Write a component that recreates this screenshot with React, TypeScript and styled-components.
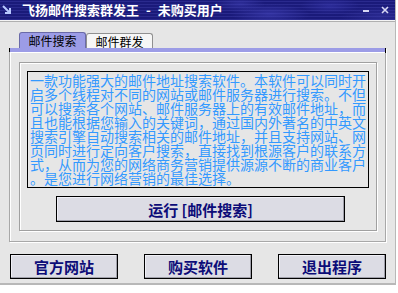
import * as React from 'react'
import styled, { createGlobalStyle } from 'styled-components'

const GlobalStyle = createGlobalStyle`
  html, body {
    margin: 0;
    padding: 0;
    background: #ffffff;
  }
  body {
    font-family: "Noto Sans CJK SC", "Liberation Sans", sans-serif;
  }
`

const Window = styled.div`
  width: 396px;
  height: 285px;
  box-sizing: border-box;
  background: #e6e6e6;
  border-right: 1px solid #b8b8b8;
  border-bottom: 2px solid #b8b8b8;
  display: flex;
  flex-direction: column;
  position: relative;
  overflow: hidden;
`

const TitleBar = styled.div`
  height: 20px;
  flex-shrink: 0;
  display: flex;
  align-items: center;
  background:
    radial-gradient(ellipse 40px 10px at 270px 14px, rgba(70, 70, 190, 0.55), transparent),
    radial-gradient(ellipse 30px 9px at 330px 6px, rgba(60, 60, 180, 0.5), transparent),
    radial-gradient(ellipse 25px 8px at 240px 4px, rgba(70, 70, 190, 0.45), transparent),
    radial-gradient(ellipse 40px 10px at 380px 16px, rgba(60, 60, 170, 0.45), transparent),
    repeating-linear-gradient(0deg, rgba(90, 90, 200, 0.25) 0 1px, transparent 1px 3px),
    #1a1a7a;
  border-bottom: 1px solid #f4f4f4;
`

const AppIcon = styled.svg`
  width: 10px;
  height: 10px;
  margin-left: 2px;
  margin-right: 10px;
`

const Title = styled.div`
  color: #ffffff;
  font-weight: 700;
  font-size: 13px;
  line-height: 20px;
  white-space: nowrap;
  flex: 1;
`

const Dash = styled.span`
  padding: 0 7px;
`

const WinButtons = styled.div`
  display: flex;
  align-items: center;
  gap: 12px;
  margin-right: 6px;
  color: #d8d8f4;
`

const MinGlyph = styled.div`
  width: 6px;
  height: 2px;
  margin-top: 1px;
  background: #d8d8f4;
`

const CloseGlyph = styled.svg`
  width: 8px;
  height: 8px;
`

const Body = styled.div`
  flex: 1;
  display: flex;
  flex-direction: column;
  padding: 0 9px 0 9px;
  border-top: 1px solid #b0b0b0;
`

const TabStrip = styled.div`
  display: flex;
  padding-left: 10px;
  margin-top: 10px;
  height: 16px;
  align-items: flex-end;
`

const Tab = styled.div<{ $active?: boolean }>`
  width: 67px;
  height: ${({ $active }) => ($active ? '16px' : '15px')};
  box-sizing: border-box;
  display: flex;
  align-items: center;
  justify-content: center;
  font-size: 12px;
  color: #000;
  background: ${({ $active }) => ($active ? '#9c9ce6' : '#f6f6f6')};
  border: 1px solid ${({ $active }) => ($active ? '#6a6aa8' : '#909090')};
  border-bottom: none;
  border-radius: 3px 3px 0 0;
`

const TabPanel = styled.div`
  width: 377px;
  height: 194px;
  box-sizing: border-box;
  border-top: 4px solid #9c9ce6;
  border-left: 1px solid #a8a8a8;
  border-right: 1px solid #a8a8a8;
  border-bottom: 1px solid #a8a8a8;
  box-shadow: inset 1px 1px 0 #ffffff, 1px 1px 0 #ffffff;
  position: relative;
  padding: 10px 8px 0 9px;

  &::before {
    content: '';
    position: absolute;
    top: -4px;
    left: -1px;
    width: 1px;
    height: 4px;
    background: #000;
  }
  &::after {
    content: '';
    position: absolute;
    top: -4px;
    right: -1px;
    width: 1px;
    height: 5px;
    background: #000;
  }
`

const GroupBox = styled.div`
  height: 169px;
  box-sizing: border-box;
  border: 1px solid #a0a0a0;
  box-shadow: inset 1px 1px 0 #ffffff, 1px 1px 0 #ffffff;
  padding: 8px 8px 0 7px;
  display: flex;
  flex-direction: column;
`

const TextBox = styled.div`
  width: 342px;
  height: 117px;
  box-sizing: border-box;
  border: 1px solid #000;
  padding: 1px 0 0 2px;
  color: #3399ff;
  font-size: 14px;
  line-height: 14px;
  overflow: hidden;
`

const TextLine = styled.div`
  white-space: nowrap;
`

const RunButton = styled.button`
  margin: 8px 0 0 29px;
  width: 289px;
  height: 26px;
  box-sizing: border-box;
  border: 1px solid #000;
  background: #dcdce4;
  box-shadow: inset -1px -1px 0 #a0a0aa, inset 1px 1px 0 #f0f0f6;
  color: #0c0c78;
  font-family: "Noto Sans CJK SC", "Liberation Sans", sans-serif;
  font-weight: 700;
  font-size: 15px;
  padding: 0;
  cursor: pointer;
`

const ButtonRow = styled.div`
  display: flex;
  gap: 26px;
  margin-top: 12px;
  margin-left: 1px;
`

const ActionButton = styled(RunButton)`
  margin: 0;
  width: 108px;
  height: 25px;
`

const lines = [
  '一款功能强大的邮件地址搜索软件。本软件可以同时开',
  '启多个线程对不同的网站或邮件服务器进行搜索。不但',
  '可以搜索各个网站、邮件服务器上的有效邮件地址，而',
  '且也能根据您输入的关键词，通过国内外著名的中英文',
  '搜索引擎自动搜索相关的邮件地址，并且支持网站、网',
  '页同时进行定向客户搜索，直接找到根源客户的联系方',
  '式，从而为您的网络商务营销提供源源不断的商业客户',
  '。是您进行网络营销的最佳选择。'
]

export default function App() {
  return (
    <>
      <GlobalStyle />
      <Window>
        <TitleBar>
          <AppIcon viewBox="0 0 10 10">
            <path d="M1 1 L8 8 M8 3 L8 8 L3 8" stroke="#b8c8ff" strokeWidth="2" fill="none" />
          </AppIcon>
          <Title>
            飞扬邮件搜索群发王<Dash>-</Dash>未购买用户
          </Title>
          <WinButtons>
            <MinGlyph />
            <CloseGlyph viewBox="0 0 8 8">
              <path d="M1 1 L7 7 M7 1 L1 7" stroke="#d8d8f4" strokeWidth="1.6" />
            </CloseGlyph>
          </WinButtons>
        </TitleBar>
        <Body>
          <TabStrip>
            <Tab $active>邮件搜索</Tab>
            <Tab>邮件群发</Tab>
          </TabStrip>
          <TabPanel>
            <GroupBox>
              <TextBox>
                {lines.map((l, i) => (
                  <TextLine key={i}>{l}</TextLine>
                ))}
              </TextBox>
              <RunButton>运行 [邮件搜索]</RunButton>
            </GroupBox>
          </TabPanel>
          <ButtonRow>
            <ActionButton>官方网站</ActionButton>
            <ActionButton>购买软件</ActionButton>
            <ActionButton>退出程序</ActionButton>
          </ButtonRow>
        </Body>
      </Window>
    </>
  )
}
